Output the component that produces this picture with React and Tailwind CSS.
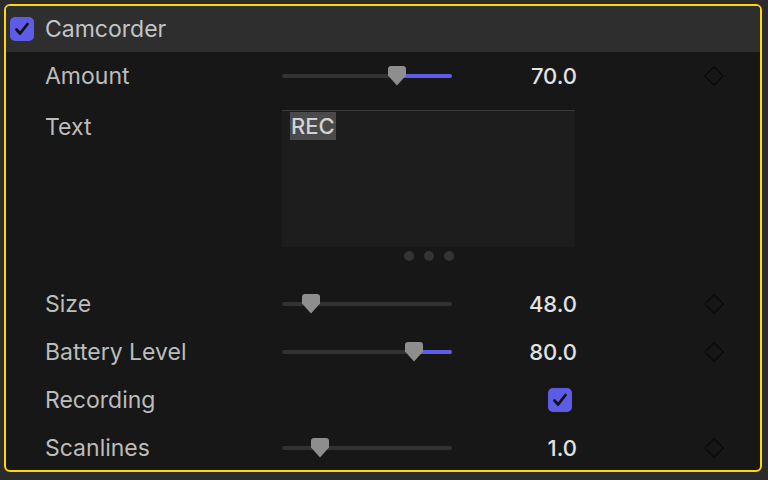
const font = { fontFamily: 'Inter, "Noto Sans", sans-serif' };

function Check({ className }) {
  return (
    <div className={"flex items-center justify-center rounded-[5px] bg-[#5e5ce6] " + className}>
      <svg width="20" height="20" viewBox="0 0 20 20" fill="none">
        <path d="M4.5 10.5l3.6 4L15.5 5" stroke="#111" strokeWidth="2.8" strokeLinecap="round" strokeLinejoin="round" />
      </svg>
    </div>
  );
}

function Diamond() {
  return (
    <div className="ml-[127px] flex h-[20px] w-[20px] items-center justify-center">
      <div className="h-[14px] w-[14px] rotate-45 border-[1.5px] border-[#070707]" />
    </div>
  );
}

function Slider({ thumb, fill }) {
  return (
    <div className="relative h-[24px] w-[170px]">
      <div className="absolute left-0 right-0 top-[10px] h-[4px] rounded-full bg-[#323232]" />
      {fill && (
        <div
          className="absolute right-0 top-[10px] h-[4px] rounded-r-full bg-[#5e5ce6]"
          style={{ left: thumb + 4 }}
        />
      )}
      <svg className="absolute top-[2px]" style={{ left: thumb - 9 }} width="18" height="20" viewBox="0 0 18 20">
        <path d="M3 0h12a3 3 0 0 1 3 3v6.5L9 19.5 0 9.5V3a3 3 0 0 1 3-3z" fill="#8e8e8e" />
      </svg>
    </div>
  );
}

function Row({ label, children }) {
  return (
    <div className="flex h-[48px] items-center">
      <div className="w-[276px] shrink-0 pl-[39px] text-[23px] text-[#bcbcbc]">{label}</div>
      {children}
    </div>
  );
}

function SliderRow({ label, value, thumb, fill }) {
  return (
    <Row label={label}>
      <Slider thumb={thumb} fill={fill} />
      <div className="w-[125px] text-right text-[22px] font-medium text-[#e2e2e2]">{value}</div>
      <Diamond />
    </Row>
  );
}

export default function App() {
  return (
    <div className="h-[480px] w-[768px] overflow-hidden bg-[#2b2b2b] p-[4px]" style={font}>
      <div className="h-[468px] w-[758px] overflow-hidden rounded-[6px] border-2 border-[#ffd60a] bg-[#171717]">
        <div className="flex h-[46px] items-center bg-[#2e2e2e] pl-[4px]">
          <Check className="h-[24px] w-[24px]" />
          <span className="ml-[11px] text-[23px] text-[#c4c4c4]">Camcorder</span>
        </div>
        <SliderRow label="Amount" value="70.0" thumb={115} fill />
        <div className="flex h-[180px]">
          <div className="w-[276px] shrink-0 pl-[39px] pt-[10px] text-[23px] text-[#bcbcbc]">Text</div>
          <div className="flex flex-col items-center pt-[10px]">
            <div className="h-[137px] w-[293px] border-t border-[#3a3a3a] bg-[#1d1d1d] pl-[8px] pt-[1px]">
              <span className="inline-block bg-[#4a4a4a] px-[1px] text-[22px] font-medium leading-[28px] text-[#d2d2d2]">REC</span>
            </div>
            <div className="mt-[4px] flex gap-[10px]">
              <div className="h-[10px] w-[10px] rounded-full bg-[#333]" />
              <div className="h-[10px] w-[10px] rounded-full bg-[#333]" />
              <div className="h-[10px] w-[10px] rounded-full bg-[#333]" />
            </div>
          </div>
        </div>
        <SliderRow label="Size" value="48.0" thumb={29} />
        <SliderRow label="Battery Level" value="80.0" thumb={132} fill />
        <Row label="Recording">
          <div className="w-[266px]" />
          <Check className="h-[24px] w-[24px]" />
        </Row>
        <SliderRow label="Scanlines" value="1.0" thumb={38} />
      </div>
    </div>
  );
}
